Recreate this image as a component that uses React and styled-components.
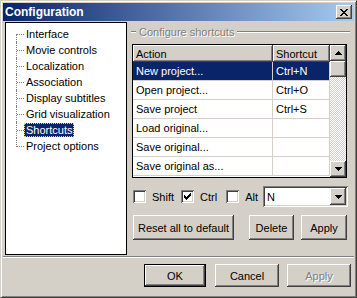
import React from "react"
import styled, { createGlobalStyle, css } from "styled-components"

const face = "#d4d0c8"
const shadow = "#808080"
const dark = "#404040"
const navy = "#0a246a"

const GlobalStyle = createGlobalStyle`
  body {
    margin: 0;
    background: ${face};
    font-family: "Liberation Sans", Arial, sans-serif;
    font-size: 11px;
    color: #000;
  }
`

const raised = css`
  box-shadow: inset -1px -1px ${dark}, inset 1px 1px #fff,
    inset -2px -2px ${shadow}, inset 2px 2px ${face};
`

const sunken = css`
  box-shadow: inset 1px 1px ${shadow}, inset -1px -1px #fff,
    inset 2px 2px ${dark}, inset -2px -2px ${face};
`

const Window = styled.div`
  width: 357px;
  height: 298px;
  box-sizing: border-box;
  background: ${face};
  border: 1px solid;
  border-color: ${face} ${dark} ${dark} ${face};
  box-shadow: inset 1px 1px #fff, inset -1px -1px ${shadow};
  padding: 2px;
  display: flex;
  flex-direction: column;
`

const TitleBar = styled.div`
  height: 18px;
  display: flex;
  align-items: center;
  justify-content: space-between;
  padding: 0 2px 0 2px;
  background: linear-gradient(to right, ${navy}, #a6caf0);
  color: #fff;
  font-weight: bold;
  font-size: 12px;
`

const CloseButton = styled.div`
  width: 16px;
  height: 14px;
  background: ${face};
  ${raised};
  display: flex;
  align-items: center;
  justify-content: center;
`

const Body = styled.div`
  display: flex;
  gap: 4px;
  padding: 1px 0 0 2px;
`

const Tree = styled.div`
  width: 122px;
  height: 233px;
  box-sizing: border-box;
  border: 1px solid #000;
  background: #fff;
  padding: 3px 0 0 0;
`

const TreeItem = styled.div`
  position: relative;
  height: 16px;
  display: flex;
  align-items: center;
  padding-left: 18px;

  &::before {
    content: "";
    position: absolute;
    left: 10px;
    top: ${p => (p.$first ? "8px" : "0")};
    height: ${p => (p.$last ? (p.$first ? "0" : "9px") : p.$first ? "8px" : "16px")};
    border-left: 1px dotted ${shadow};
  }
  &::after {
    content: "";
    position: absolute;
    left: 11px;
    top: 8px;
    width: 7px;
    border-top: 1px dotted ${shadow};
  }
`

const TreeLabel = styled.span`
  padding: 0 2px;
  line-height: 14px;
  height: 14px;
  white-space: nowrap;
  ${p =>
    p.$selected &&
    css`
      background: ${navy};
      color: #fff;
      outline: 1px dotted #d8d890;
      outline-offset: -1px;
    `}
`

const RightPanel = styled.div`
  width: 219px;
  display: flex;
  flex-direction: column;
`

const GroupHeader = styled.div`
  display: flex;
  align-items: center;
  height: 12px;
  margin-top: 4px;
`

const EtchLine = styled.div`
  height: 0;
  border-top: 1px solid ${shadow};
  border-bottom: 1px solid #fff;
  width: ${p => p.$w || "auto"};
  flex: ${p => (p.$grow ? 1 : "none")};
`

const GroupLabel = styled.span`
  color: ${shadow};
  text-shadow: 1px 1px #fff;
  padding: 0 3px;
  white-space: nowrap;
`

const ListBox = styled.div`
  margin: 6px 0 0 1px;
  width: 215px;
  height: 134px;
  box-sizing: border-box;
  border: 1px solid #000;
  background: #fff;
  display: flex;
`

const ListMain = styled.div`
  flex: 1;
  display: flex;
  flex-direction: column;
`

const HeaderRow = styled.div`
  display: flex;
  height: 17px;
`

const HeaderCell = styled.div`
  width: ${p => p.$w}px;
  box-sizing: border-box;
  background: ${face};
  ${raised};
  padding-left: 3px;
  display: flex;
  align-items: center;
`

const Row = styled.div`
  display: flex;
  height: 19px;
  background: ${p => (p.$selected ? navy : "#fff")};
  color: ${p => (p.$selected ? "#fff" : "#000")};
`

const Cell = styled.div`
  width: ${p => p.$w}px;
  box-sizing: border-box;
  border-right: 1px solid ${face};
  border-bottom: 1px solid ${face};
  padding-left: 3px;
  display: flex;
  align-items: center;
  white-space: nowrap;
  overflow: hidden;
`

const ScrollBar = styled.div`
  width: 16px;
  display: flex;
  flex-direction: column;
  background: repeating-conic-gradient(#fff 0 25%, ${face} 0 50%) 0 0 / 2px 2px;
`

const ScrollButton = styled.div`
  width: 16px;
  height: 16px;
  background: ${face};
  ${raised};
  display: flex;
  align-items: center;
  justify-content: center;
  flex: none;
`

const Spacer = styled.div`
  flex: 1;
`

const ControlRow = styled.div`
  display: flex;
  align-items: center;
  height: 21px;
  margin: 8px 0 0 2px;
`

const CheckLabel = styled.label`
  display: flex;
  align-items: center;
  gap: 6px;
  margin-right: ${p => p.$mr}px;
`

const CheckBox = styled.span`
  width: 13px;
  height: 13px;
  box-sizing: border-box;
  background: #fff;
  ${sunken};
  display: flex;
  align-items: center;
  justify-content: center;
`

const Combo = styled.div`
  width: 85px;
  height: 21px;
  box-sizing: border-box;
  background: #fff;
  ${sunken};
  padding: 2px;
  display: flex;
  align-items: center;
  margin-left: auto;
  margin-right: 2px;
`

const ComboText = styled.span`
  flex: 1;
  padding-left: 2px;
`

const ComboButton = styled.div`
  width: 16px;
  height: 17px;
  background: ${face};
  ${raised};
  display: flex;
  align-items: center;
  justify-content: center;
`

const ButtonRow = styled.div`
  display: flex;
  margin: 8px 0 0 2px;
`

const Button = styled.button`
  width: ${p => p.$w}px;
  height: ${p => p.$h || 23}px;
  margin-left: ${p => p.$ml || 0}px;
  box-sizing: border-box;
  background: ${face};
  border: ${p => (p.$default ? "1px solid #000" : "none")};
  ${raised};
  font-family: "Liberation Sans", Arial, sans-serif;
  font-size: 11px;
  color: ${p => (p.$disabled ? shadow : "#000")};
  text-shadow: ${p => (p.$disabled ? "1px 1px #fff" : "none")};
  padding: 0;
`

const Separator = styled.div`
  margin-top: 1px;
  height: 0;
  border-top: 1px solid ${shadow};
  border-bottom: 1px solid #fff;
`

const Footer = styled.div`
  display: flex;
  justify-content: flex-end;
  padding: 6px 3px 0 0;
`

const Pixels = ({ w, h, rects }) => (
  <svg width={w} height={h} viewBox={`0 0 ${w} ${h}`} shapeRendering="crispEdges">
    {rects.map(([x, y, rw], i) => (
      <rect key={i} x={x} y={y} width={rw} height={1} fill="#000" />
    ))}
  </svg>
)

const CloseGlyph = () => (
  <Pixels
    w={8}
    h={7}
    rects={[
      [0, 0, 2], [6, 0, 2],
      [1, 1, 2], [5, 1, 2],
      [2, 2, 4],
      [3, 3, 2],
      [2, 4, 4],
      [1, 5, 2], [5, 5, 2],
      [0, 6, 2], [6, 6, 2],
    ]}
  />
)

const UpArrow = () => (
  <Pixels w={7} h={4} rects={[[3, 0, 1], [2, 1, 3], [1, 2, 5], [0, 3, 7]]} />
)

const DownArrow = () => (
  <Pixels w={7} h={4} rects={[[0, 0, 7], [1, 1, 5], [2, 2, 3], [3, 3, 1]]} />
)

const CheckMark = () => (
  <Pixels
    w={7}
    h={7}
    rects={[
      [6, 0, 1],
      [5, 1, 2],
      [0, 2, 1], [4, 2, 3],
      [0, 3, 2], [3, 3, 3],
      [0, 4, 5],
      [1, 5, 3],
      [2, 6, 1],
    ]}
  />
)

const treeItems = [
  "Interface",
  "Movie controls",
  "Localization",
  "Association",
  "Display subtitles",
  "Grid visualization",
  "Shortcuts",
  "Project options",
]

const shortcuts = [
  { action: "New project...", key: "Ctrl+N" },
  { action: "Open project...", key: "Ctrl+O" },
  { action: "Save project", key: "Ctrl+S" },
  { action: "Load original...", key: "" },
  { action: "Save original...", key: "" },
  { action: "Save original as...", key: "" },
]

const modifiers = [
  { label: "Shift", checked: false, mr: 7 },
  { label: "Ctrl", checked: true, mr: 9 },
  { label: "Alt", checked: false, mr: 0 },
]

export default function App() {
  return (
    <>
      <GlobalStyle />
      <Window>
        <TitleBar>
          <span>Configuration</span>
          <CloseButton>
            <CloseGlyph />
          </CloseButton>
        </TitleBar>

        <Body>
          <Tree>
            {treeItems.map((item, i) => (
              <TreeItem key={item} $first={i === 0} $last={i === treeItems.length - 1}>
                <TreeLabel $selected={item === "Shortcuts"}>{item}</TreeLabel>
              </TreeItem>
            ))}
          </Tree>

          <RightPanel>
            <GroupHeader>
              <EtchLine $w="5px" />
              <GroupLabel>Configure shortcuts</GroupLabel>
              <EtchLine $grow />
            </GroupHeader>

            <ListBox>
              <ListMain>
                <HeaderRow>
                  <HeaderCell $w={140}>Action</HeaderCell>
                  <HeaderCell $w={57}>Shortcut</HeaderCell>
                </HeaderRow>
                {shortcuts.map((s, i) => (
                  <Row key={s.action} $selected={i === 0}>
                    <Cell $w={140}>{s.action}</Cell>
                    <Cell $w={57}>{s.key}</Cell>
                  </Row>
                ))}
              </ListMain>
              <ScrollBar>
                <ScrollButton>
                  <UpArrow />
                </ScrollButton>
                <ScrollButton />
                <Spacer />
                <ScrollButton>
                  <DownArrow />
                </ScrollButton>
              </ScrollBar>
            </ListBox>

            <ControlRow>
              {modifiers.map(m => (
                <CheckLabel key={m.label} $mr={m.mr}>
                  <CheckBox>{m.checked && <CheckMark />}</CheckBox>
                  {m.label}
                </CheckLabel>
              ))}
              <Combo>
                <ComboText>N</ComboText>
                <ComboButton>
                  <DownArrow />
                </ComboButton>
              </Combo>
            </ControlRow>

            <ButtonRow>
              <Button $w={101} $h={25}>Reset all to default</Button>
              <Button $w={45} $h={25} $ml={15}>Delete</Button>
              <Button $w={46} $h={25} $ml={7}>Apply</Button>
            </ButtonRow>
          </RightPanel>
        </Body>

        <Separator />

        <Footer>
          <Button $w={62} $default>OK</Button>
          <Button $w={64} $ml={9}>Cancel</Button>
          <Button $w={64} $ml={8} $disabled>Apply</Button>
        </Footer>
      </Window>
    </>
  )
}
